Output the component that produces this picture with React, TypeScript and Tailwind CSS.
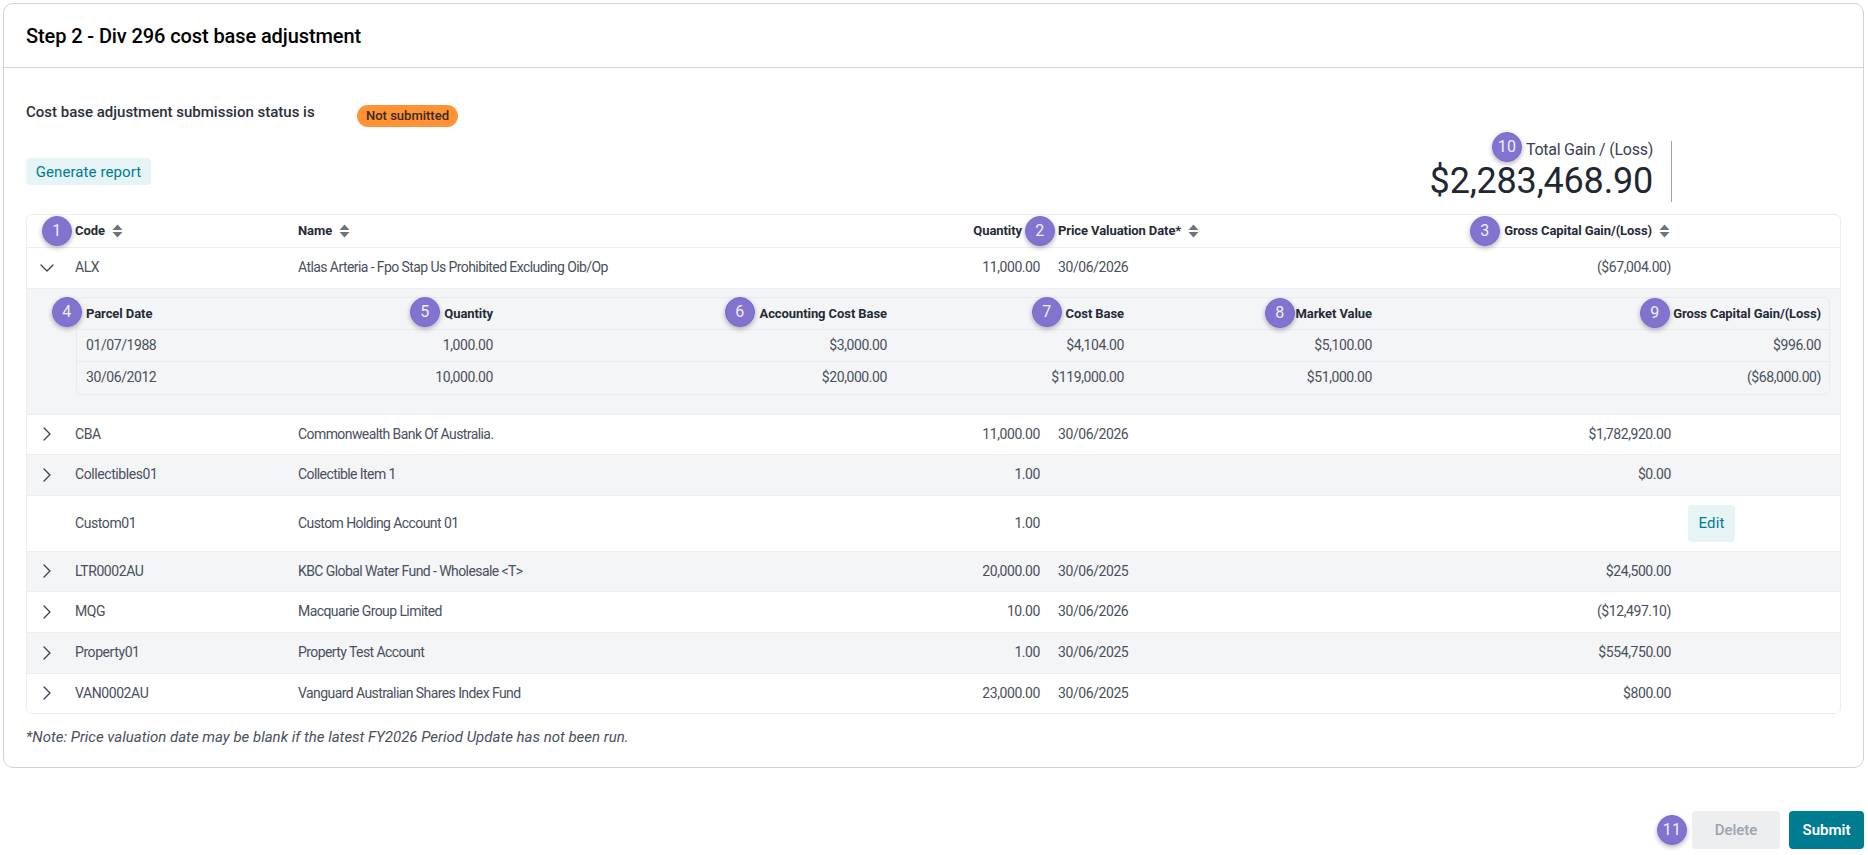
import { ChevronDown, ChevronRight } from "lucide-react";

const rows = [
  { code: "CBA", name: "Commonwealth Bank Of Australia.", qty: "11,000.00", date: "30/06/2026", gain: "$1,782,920.00", h: "h-[40px]" },
  { code: "Collectibles01", name: "Collectible Item 1", qty: "1.00", date: "", gain: "$0.00", h: "h-[41px]" },
  { code: "Custom01", name: "Custom Holding Account 01", qty: "1.00", date: "", gain: "", h: "h-[56px]", edit: true },
  { code: "LTR0002AU", name: "KBC Global Water Fund - Wholesale <T>", qty: "20,000.00", date: "30/06/2025", gain: "$24,500.00", h: "h-[40px]" },
  { code: "MQG", name: "Macquarie Group Limited", qty: "10.00", date: "30/06/2026", gain: "($12,497.10)", h: "h-[41px]" },
  { code: "Property01", name: "Property Test Account", qty: "1.00", date: "30/06/2025", gain: "$554,750.00", h: "h-[41px]" },
  { code: "VAN0002AU", name: "Vanguard Australian Shares Index Fund", qty: "23,000.00", date: "30/06/2025", gain: "$800.00", h: "h-[40px]" },
];

const parcels = [
  { date: "01/07/1988", qty: "1,000.00", acb: "$3,000.00", cost: "$4,104.00", market: "$5,100.00", gain: "$996.00" },
  { date: "30/06/2012", qty: "10,000.00", acb: "$20,000.00", cost: "$119,000.00", market: "$51,000.00", gain: "($68,000.00)" },
];

// numbered markers sitting on top of the page
const markers = [
  { n: 1, x: 57, y: 231 },
  { n: 2, x: 1040, y: 231 },
  { n: 3, x: 1485, y: 231 },
  { n: 4, x: 67, y: 312 },
  { n: 5, x: 425, y: 312 },
  { n: 6, x: 740, y: 312 },
  { n: 7, x: 1047, y: 312 },
  { n: 8, x: 1280, y: 313 },
  { n: 9, x: 1655, y: 313 },
  { n: 10, x: 1507, y: 147 },
  { n: 11, x: 1672, y: 830 },
];

function SortIcon() {
  return (
    <svg width="11" height="14" viewBox="0 0 11 14" className="ml-[7px] shrink-0 text-[#6b7280]">
      <path d="M5.5 0.5 L10.5 6 H0.5 Z" fill="currentColor" />
      <path d="M0.5 8 H10.5 L5.5 13.5 Z" fill="currentColor" />
    </svg>
  );
}

function Marker({ n, x, y }: { n: number; x: number; y: number }) {
  return (
    <div
      className="absolute w-[30px] h-[30px] rounded-full bg-[#8273cf] border border-[#7a68d6] shadow-[0_2px_5px_rgba(0,0,0,0.3)] flex items-center justify-center text-[16px] text-[#f1eefc] tracking-[0.3px]"
      style={{ left: x - 15, top: y - 15 }}
    >
      {n}
    </div>
  );
}

const th = "text-[13px] font-bold text-[#252b36] tracking-[-0.08px]";
const td = "text-[14px] text-[#49505c] tracking-[-0.42px]";
const tdName = "text-[14px] text-[#49505c] tracking-[-0.58px]";

export default function App() {
  return (
    <div className="relative w-[1868px] h-[855px] bg-white overflow-hidden font-['Roboto',sans-serif]">
      <div className="mx-[3px] mt-[3px] w-[1861px] h-[765px] border border-[#d1d3d8] rounded-[10px]">
        <div className="h-[64px] border-b border-[#d1d3d8] flex items-center pl-[22px]">
          <h2 className="text-[20px] font-medium text-black tracking-[-0.1px]">Step 2 - Div 296 cost base adjustment</h2>
        </div>

        <div className="px-[22px]">
          <div className="flex items-start mt-[37px] h-[22px]">
            <span className="text-[15px] font-medium text-[#2b303a] -mt-[4px] w-[331px]">Cost base adjustment submission status is</span>
            <span className="h-[22px] w-[101px] rounded-full bg-[#ff9234] text-[#3a2a1a] text-[13px] font-medium flex items-center justify-center">
              Not submitted
            </span>
          </div>

          <div className="flex justify-between items-start mt-[14px] h-[61px]">
            <button className="mt-[17px] h-[27px] w-[125px] pt-[2px] rounded-[4px] bg-[#e6f4f6] text-[#007c91] text-[15px] tracking-[0.1px]">
              Generate report
            </button>
            <div className="flex items-stretch mr-[169px]">
              <div className="flex flex-col items-end pr-[18px]">
                <span className="text-[16px] text-[#374151] leading-[18px] tracking-[-0.25px]">Total Gain / (Loss)</span>
                <span className="text-[36px] text-[#1f2733] leading-[41px] mt-[2px] tracking-[-0.2px]">$2,283,468.90</span>
              </div>
              <div className="w-px bg-[#9ca3af]" />
            </div>
          </div>

          <div className="mt-[12px] w-[1815px] border border-[#eceef0] rounded-[6px] overflow-hidden">
            <table className="w-full table-fixed">
              <colgroup>
                <col className="w-[40px]" />
                <col className="w-[223px]" />
                <col className="w-[510px]" />
                <col className="w-[250px]" />
                <col className="w-[450px]" />
                <col className="w-[179px]" />
                <col className="w-[161px]" />
              </colgroup>
              <thead>
                <tr className="h-[32px] border-b border-[#eceef0]">
                  <th />
                  <th className="pl-2">
                    <div className={`flex items-center ${th}`}>Code <SortIcon /></div>
                  </th>
                  <th className="pl-2">
                    <div className={`flex items-center ${th}`}>Name <SortIcon /></div>
                  </th>
                  <th className="pr-[10px]">
                    <div className={`flex items-center justify-end ${th}`}>Quantity <SortIcon /></div>
                  </th>
                  <th className="pl-2">
                    <div className={`flex items-center ${th}`}>Price Valuation Date* <SortIcon /></div>
                  </th>
                  <th colSpan={2} className="pr-[170px]">
                    <div className={`flex items-center justify-end ${th}`}>Gross Capital Gain/(Loss) <SortIcon /></div>
                  </th>
                </tr>
              </thead>
              <tbody>
                <tr className="h-[41px] border-b border-[#eceef0]">
                  <td className="text-[#374151]"><ChevronDown size={24} strokeWidth={1.25} className="mx-auto" /></td>
                  <td className={`pl-2 ${td}`}>ALX</td>
                  <td className={`pl-2 ${tdName}`}>Atlas Arteria - Fpo Stap Us Prohibited Excluding Oib/Op</td>
                  <td className={`pr-[10px] text-right ${td}`}>11,000.00</td>
                  <td className={`pl-2 ${td}`}>30/06/2026</td>
                  <td className={`pr-2 text-right ${td}`}>($67,004.00)</td>
                  <td />
                </tr>
                <tr className="border-b border-[#eceef0] bg-[#f4f5f7]">
                  <td colSpan={7} className="h-[126px] pl-[49px] pr-[10px] pt-[8px] pb-[19px] align-top">
                    <div className="border border-[#e8eaed] rounded-[6px] overflow-hidden">
                      <table className="w-full table-fixed">
                        <colgroup>
                          <col className="w-[223px]" />
                          <col className="w-[203px]" />
                          <col className="w-[394px]" />
                          <col className="w-[237px]" />
                          <col className="w-[248px]" />
                          <col />
                        </colgroup>
                        <thead>
                          <tr className="h-[32px] border-b border-[#e8eaed]">
                            <th className="pl-[9px] text-left"><span className={th}>Parcel Date</span></th>
                            <th className="pr-[10px] text-right"><span className={th}>Quantity</span></th>
                            <th className="pr-[10px] text-right"><span className={th}>Accounting Cost Base</span></th>
                            <th className="pr-[10px] text-right"><span className={th}>Cost Base</span></th>
                            <th className="pr-[10px] text-right"><span className={th}>Market Value</span></th>
                            <th className="pr-[8px] text-right"><span className={th}>Gross Capital Gain/(Loss)</span></th>
                          </tr>
                        </thead>
                        <tbody>
                          {parcels.map((p, i) => (
                            <tr key={p.date} className={`h-[32px] ${i === 0 ? "border-b border-[#e8eaed]" : ""}`}>
                              <td className={`pl-[9px] ${td}`}>{p.date}</td>
                              <td className={`pr-[10px] text-right ${td}`}>{p.qty}</td>
                              <td className={`pr-[10px] text-right ${td}`}>{p.acb}</td>
                              <td className={`pr-[10px] text-right ${td}`}>{p.cost}</td>
                              <td className={`pr-[10px] text-right ${td}`}>{p.market}</td>
                              <td className={`pr-[8px] text-right ${td}`}>{p.gain}</td>
                            </tr>
                          ))}
                        </tbody>
                      </table>
                    </div>
                  </td>
                </tr>
                {rows.map((r, i) => (
                  <tr key={r.code} className={`${r.h} ${i % 2 === 1 ? "bg-[#f4f5f7]" : "bg-white"} ${i < rows.length - 1 ? "border-b border-[#eceef0]" : ""}`}>
                    <td className="text-[#374151]">
                      {!r.edit && <ChevronRight size={24} strokeWidth={1.25} className="mx-auto" />}
                    </td>
                    <td className={`pl-2 ${td}`}>{r.code}</td>
                    <td className={`pl-2 ${tdName}`}>{r.name}</td>
                    <td className={`pr-[10px] text-right ${td}`}>{r.qty}</td>
                    <td className={`pl-2 ${td}`}>{r.date}</td>
                    <td className={`pr-2 text-right ${td}`}>{r.gain}</td>
                    <td className="pl-[9px]">
                      {r.edit && (
                        <button className="w-[47px] h-[37px] rounded-[4px] bg-[#e6f4f6] text-[#007c91] text-[15px] tracking-[0.2px]">Edit</button>
                      )}
                    </td>
                  </tr>
                ))}
              </tbody>
            </table>
          </div>

          <p className="mt-[12px] text-[15px] italic text-[#49505c]">
            *Note: Price valuation date may be blank if the latest FY2026 Period Update has not been run.
          </p>
        </div>
      </div>

      <div className="flex justify-end gap-[9px] mt-[43px] pr-[4px]">
        <button className="w-[88px] h-[38px] rounded-[4px] bg-[#eceef0] text-[#9ca3af] text-[15px] font-medium">Delete</button>
        <button className="w-[75px] h-[38px] rounded-[4px] bg-[#007c91] text-white text-[15px] font-semibold">Submit</button>
      </div>

      {markers.map((m) => (
        <Marker key={m.n} {...m} />
      ))}
    </div>
  );
}
